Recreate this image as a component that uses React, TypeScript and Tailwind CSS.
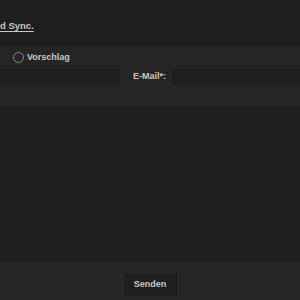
import React from "react";

export default function App() {
  return (
    <div
      className="w-[300px] h-[300px] overflow-hidden flex flex-col bg-[#1e1e1e] text-[#c9c9c9]"
      style={{ fontFamily: '"Liberation Sans", Arial, sans-serif' }}
    >
      <div className="h-[46px] shrink-0 pt-[12px]">
        <span className="text-[9.5px] font-bold underline underline-offset-2">d Sync.</span>
      </div>
      <div className="h-[60px] shrink-0 bg-[#252525] flex flex-col">
        <label className="h-[23px] flex items-center pl-[13px] gap-[3px] text-[9px] font-bold">
          <span className="w-[11px] h-[11px] rounded-full border border-[#8a8a8a]" />
          <span>Vorschlag</span>
        </label>
        <div className="h-[16px] flex items-center">
          <div className="w-[120px] h-full bg-[#1f1f1f]" />
          <span className="ml-[13px] w-[39px] text-[9px] font-bold">E-Mail*:</span>
          <div className="flex-1 h-full bg-[#1f1f1f]" />
        </div>
      </div>
      <div className="flex-1 bg-[#1f1f1f]" />
      <div className="h-[38px] shrink-0 bg-[#262626] flex justify-center pt-[11px]">
        <button className="w-[53px] h-[23px] bg-[#1f1f1f] text-[9px] font-bold text-[#c9c9c9]">
          Senden
        </button>
      </div>
    </div>
  );
}
